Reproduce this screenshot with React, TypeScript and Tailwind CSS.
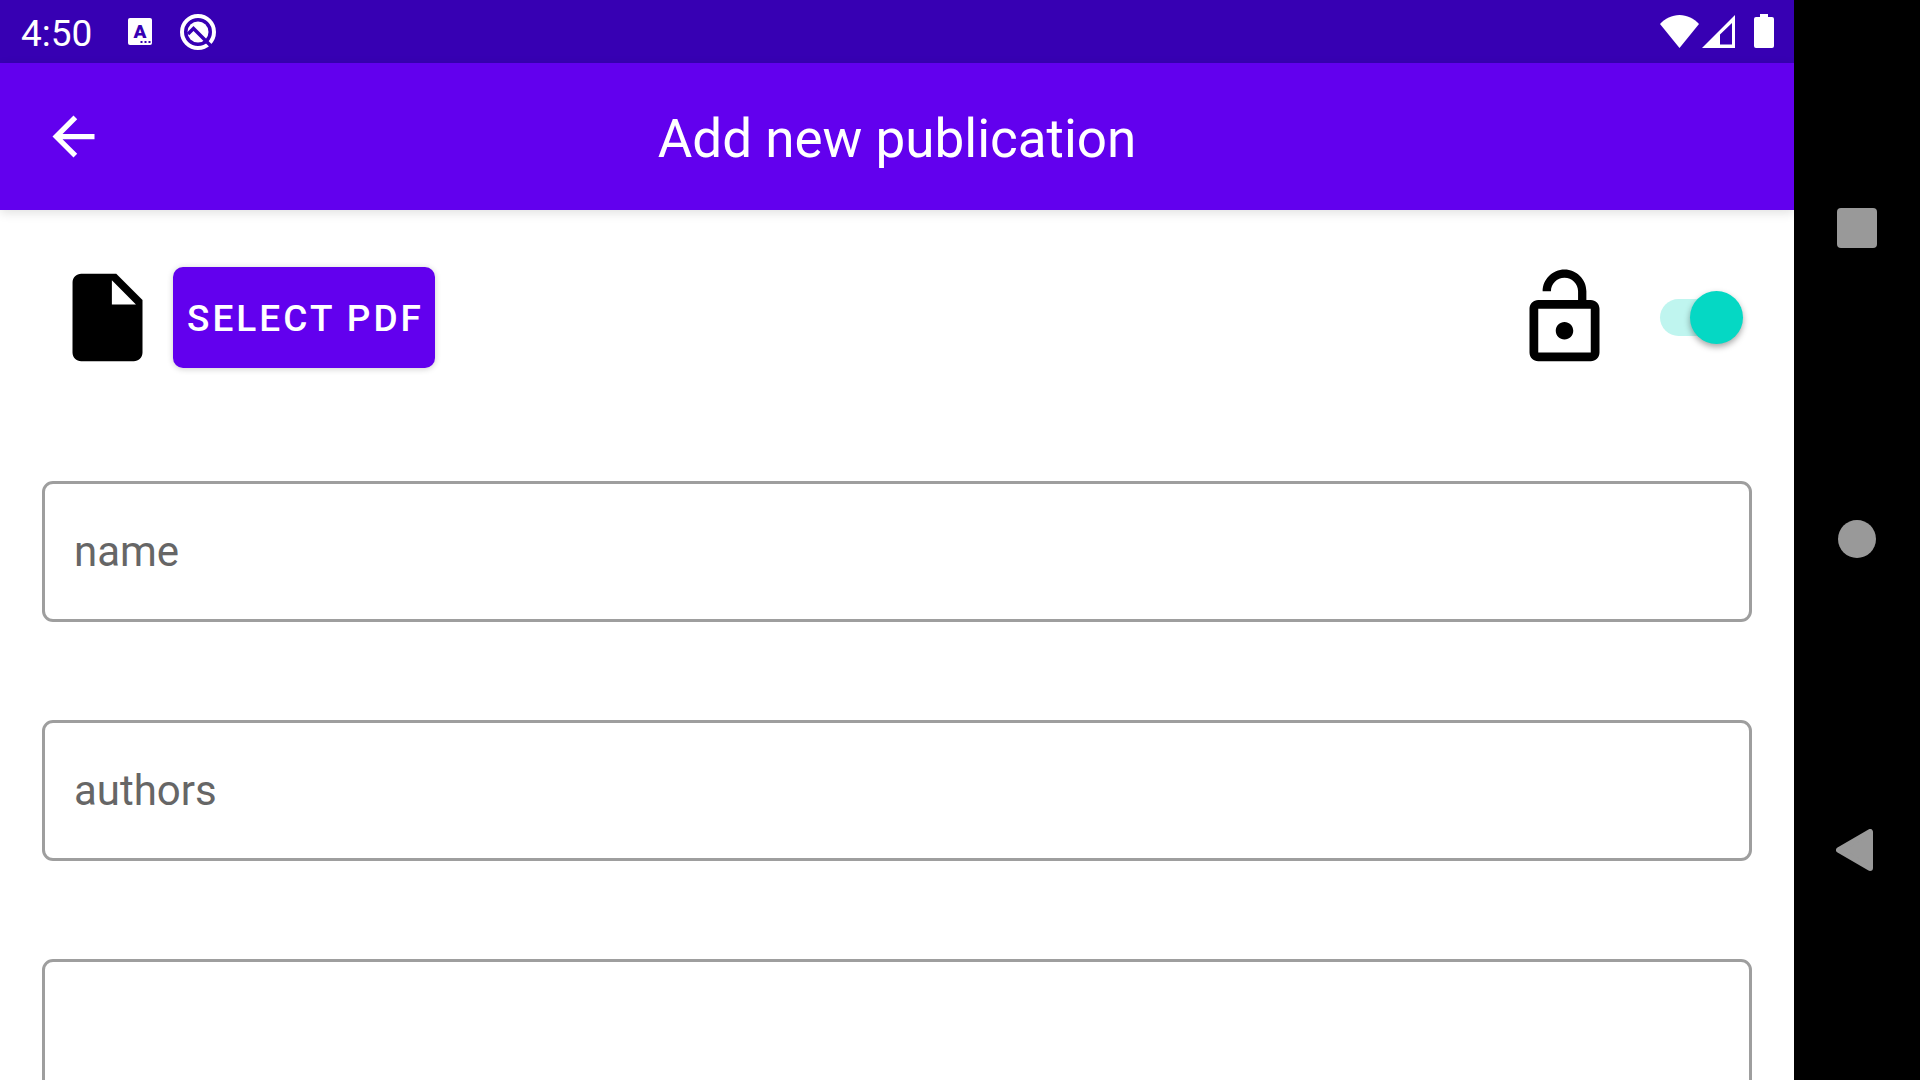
import React from "react";

function KeyboardIcon() {
  return (
    <svg className="h-[27px] w-6" viewBox="0 0 24 27" aria-hidden="true">
      <rect width="24" height="27" rx="2" fill="#fff" />
      <text x="12" y="20" textAnchor="middle" fontFamily="Roboto, sans-serif" fontWeight="900" fontSize="19" fill="#3700b3">
        A
      </text>
      <path d="M12.5 23h2v2h-2zM16.5 23h2v2h-2zM20.5 23h2v2h-2z" fill="#3700b3" />
    </svg>
  );
}

function QIcon() {
  return (
    <svg className="size-9" viewBox="0 0 36 36" aria-hidden="true">
      <circle cx="18" cy="18" r="16" fill="none" stroke="#fff" strokeWidth="4" />
      <circle cx="18" cy="18" r="10.500" fill="#fff" />
      <path d="M8 20L13.500 14.500L31 32" fill="none" stroke="#3700b3" strokeWidth="3.500" />
    </svg>
  );
}

function WifiIcon() {
  return (
    <svg className="h-[33px] w-[39px]" viewBox="0 0 39 33" aria-hidden="true">
      <path d="M19.500 33L0 9C5 3.500 12 0 19.500 0S34 3.500 39 9z" fill="#fff" />
    </svg>
  );
}

function SignalIcon() {
  return (
    <svg className="size-[33px]" viewBox="0 0 33 33" aria-hidden="true">
      <path fillRule="evenodd" d="M33 0V33H0zM30 8L18 19.500V29.500H30z" fill="#fff" />
    </svg>
  );
}

function BatteryIcon() {
  return (
    <svg className="h-[34px] w-5" viewBox="0 0 20 34" aria-hidden="true">
      <path d="M6 0h8v3h4a2 2 0 0 1 2 2v27a2 2 0 0 1-2 2H2a2 2 0 0 1-2-2V5a2 2 0 0 1 2-2h4z" fill="#fff" />
    </svg>
  );
}

function BackArrowIcon() {
  return (
    <svg className="size-[63px]" viewBox="0 0 24 24" fill="currentColor" aria-hidden="true">
      <path d="M20 11H7.830l5.590-5.590L12 4l-8 8 8 8 1.410-1.410L7.830 13H20v-2z" />
    </svg>
  );
}

function FileIcon() {
  return (
    <svg className="size-[105px]" viewBox="0 0 24 24" aria-hidden="true">
      <path d="M6 2c-1.100 0-1.990.9-1.990 2L4 20c0 1.100.89 2 1.990 2H18c1.100 0 2-.9 2-2V8l-6-6H6zm7 7V3.500L18.500 9H13z" />
    </svg>
  );
}

function LockOpenIcon() {
  return (
    <svg className="size-[105px]" viewBox="0 0 24 24" aria-hidden="true">
      <path d="M12 17c1.100 0 2-.9 2-2s-.9-2-2-2-2 .9-2 2 .9 2 2 2zm6-9h-1V6c0-2.760-2.240-5-5-5S7 3.240 7 6h1.900c0-1.710 1.390-3.100 3.100-3.100 1.710 0 3.100 1.390 3.100 3.100v2H6c-1.100 0-2 .9-2 2v10c0 1.100.9 2 2 2h12c1.100 0 2-.9 2-2V10c0-1.100-.9-2-2-2zm0 12H6V10h12v10z" />
    </svg>
  );
}

function StatusBar() {
  return (
    <div className="flex h-[63px] shrink-0 items-center justify-between bg-[#3700b3] pr-5 pl-[21px] text-white">
      <div className="flex items-center">
        <span className="pt-1 text-[37px] leading-[44px]">4:50</span>
        <div className="ml-9 flex items-center gap-7">
          <KeyboardIcon />
          <QIcon />
        </div>
      </div>
      <div className="flex items-center pb-px">
        <WifiIcon />
        <div className="mr-[19px] ml-[3px]">
          <SignalIcon />
        </div>
        <BatteryIcon />
      </div>
    </div>
  );
}

function AppBar() {
  return (
    <header className="z-10 grid h-[147px] shrink-0 grid-cols-[1fr_auto_1fr] items-center bg-[#6200ee] px-[42px] text-white shadow-[0_3px_10px_rgba(0,0,0,0.12)]">
      <button type="button" aria-label="Back" className="justify-self-start">
        <BackArrowIcon />
      </button>
      <h1 className="pt-1 text-[53px] leading-[62px]">Add new publication</h1>
    </header>
  );
}

const fieldClass =
  "block w-full rounded-[11px] border-[3px] border-[#9e9e9e] bg-white px-[29px] text-[42px] text-black outline-none placeholder:text-[#666666] placeholder:opacity-100";

function TextField({ name }: { name: string }) {
  return <input type="text" name={name} aria-label={name} placeholder={name} className={`${fieldClass} h-[141px]`} />;
}

function Toggle() {
  return (
    <label className="relative flex h-[53px] w-[83px] items-center">
      <input type="checkbox" role="switch" defaultChecked aria-label="Public access" className="peer sr-only" />
      <span className="h-[37px] w-[74px] rounded-full bg-[#bff5ef]" />
      <span className="absolute right-0 size-[53px] rounded-full bg-[#05d8c4] shadow-[0_3px_6px_rgba(0,0,0,0.35)] peer-[:not(:checked)]:right-auto peer-[:not(:checked)]:left-0" />
    </label>
  );
}

function NavigationBar() {
  return (
    <nav className="flex w-[126px] shrink-0 flex-col bg-black py-[72px]">
      <button type="button" aria-label="Overview" className="flex flex-1 items-center justify-center">
        <span className="size-10 rounded-[4px] bg-[#999999]" />
      </button>
      <button type="button" aria-label="Home" className="flex flex-1 items-center justify-center">
        <span className="size-[38px] rounded-full bg-[#999999]" />
      </button>
      <button type="button" aria-label="Back" className="flex flex-1 items-center justify-center pr-[5px] pb-[2px]">
        <svg className="h-[42px] w-[37px]" viewBox="0 0 37 42" aria-hidden="true">
          <path d="M3 21L34 3V39z" fill="#999" stroke="#999" strokeWidth="6" strokeLinejoin="round" />
        </svg>
      </button>
    </nav>
  );
}

export default function App() {
  return (
    <div className="flex h-screen overflow-hidden bg-white font-[Roboto,sans-serif]">
      <div className="flex min-w-0 flex-1 flex-col overflow-hidden">
        <StatusBar />
        <AppBar />
        <main className="min-h-0 flex-1 overflow-hidden px-[42px] pt-[55px]">
          <div className="flex items-center justify-between pr-[9px] pl-[13px]">
            <div className="flex items-center gap-[13px]">
              <FileIcon />
              <button
                type="button"
                className="h-[101px] w-[262px] rounded-[10px] bg-[#6200ee] pt-[2px] pl-[3px] text-[37px] font-medium tracking-[3px] whitespace-nowrap text-white shadow-[0_1px_6px_rgba(0,0,0,0.2)]"
              >
                SELECT PDF
              </button>
            </div>
            <div className="flex items-center gap-[43px]">
              <LockOpenIcon />
              <Toggle />
            </div>
          </div>
          <form className="mt-[111px] flex flex-col gap-[98px]">
            <TextField name="name" />
            <TextField name="authors" />
            <textarea aria-label="description" className={`${fieldClass} h-[300px] resize-none py-8`} />
          </form>
        </main>
      </div>
      <NavigationBar />
    </div>
  );
}
